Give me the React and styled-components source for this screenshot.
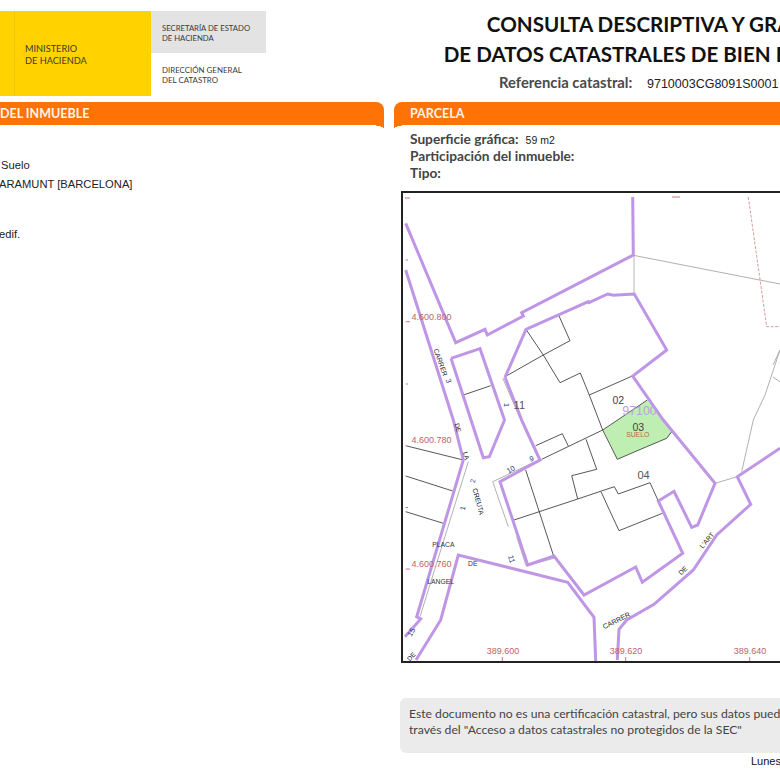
import React from "react";
import styled, { createGlobalStyle } from "styled-components";

const Global = createGlobalStyle`
  html, body { margin: 0; padding: 0; background: #fff; overflow: hidden; }
`;

const Viewport = styled.div`
  width: 780px;
  height: 780px;
  overflow: hidden;
  background: #fff;
`;
const Sheet = styled.div`
  width: 1060px;
  display: flex;
  flex-direction: column;
`;
const Header = styled.header`
  display: flex;
  height: 102px;
  box-sizing: border-box;
  padding-top: 10px;
`;
const Logo = styled.div`
  display: flex;
  flex: 0 0 266px;
  height: 85px;
  margin-top: 1px;
  font-family: Lato, "Liberation Sans", sans-serif;
  color: #3a3a3a;
`;
const Crest = styled.div`
  width: 14px;
  background: #ffd200;
  border-right: 1px solid #f0c800;
`;
const Ministry = styled.div`
  flex: 1;
  background: #ffd200;
  padding: 32px 0 0 10px;
  font-size: 9.2px;
  line-height: 12px;
`;
const Offices = styled.div`
  width: 115px;
  display: flex;
  flex-direction: column;
`;
const Secretary = styled.div`
  height: 42px;
  box-sizing: border-box;
  background: #e3e3e3;
  padding: 13px 0 0 11px;
  font-size: 7.7px;
  line-height: 9.5px;
`;
const Direction = styled.div`
  padding: 13px 0 0 11px;
  font-size: 7.9px;
  line-height: 9.5px;
`;
const TitleBlock = styled.div`
  flex: 0 0 792px;
  font-family: Lato, "Liberation Sans", sans-serif;
  white-space: nowrap;
`;
const Title = styled.h1`
  margin: 0;
  text-align: center;
  font-size: 20.6px;
  line-height: 29.5px;
  font-weight: 700;
  color: #111;
`;
const RefLine = styled.div`
  display: flex;
  align-items: baseline;
  margin: 4px 0 0 233px;
`;
const RefLabel = styled.span`
  font-size: 14.8px;
  font-weight: 700;
  color: #4a4a4a;
  width: 148px;
`;
const RefValue = styled.span`
  font-family: "Liberation Sans", Arial, sans-serif;
  font-size: 12.5px;
  color: #222;
`;
const Columns = styled.main`
  display: flex;
  gap: 10px;
`;
const LeftColumn = styled.section`
  flex: 0 0 384px;
`;
const RightColumn = styled.section`
  flex: 0 0 666px;
`;
const Bar = styled.div`
  position: relative;
  height: 23px;
  line-height: 24px;
  background: #ff7205;
  color: #fff4e8;
  font-family: Lato, "Liberation Sans", sans-serif;
  font-weight: 700;
  font-size: 12.5px;
  white-space: nowrap;
  padding-left: ${(p) => p.$inset}px;
  border-radius: ${(p) => (p.$side === "right" ? "0 8px 0 0" : "8px 0 0 0")};
  &::after {
    content: "";
    position: absolute;
    top: 100%;
    ${(p) => p.$side}: 0;
    width: 14px;
    height: 4px;
    background: radial-gradient(
      ellipse 14px 4px at ${(p) => (p.$side === "right" ? "0 100%" : "100% 100%")},
      transparent 97%,
      #ff7205 100%
    );
  }
`;
const LeftBody = styled.div`
  padding-top: 31px;
  font-family: "Liberation Sans", Arial, sans-serif;
  font-size: 11.2px;
  line-height: 19px;
  color: #222;
  white-space: nowrap;
`;
const LeftRow = styled.div`
  margin-left: ${(p) => p.$indent || 0}px;
  margin-top: ${(p) => p.$gap || 0}px;
`;
const Facts = styled.div`
  padding: 5px 0 0 16px;
  font-family: Lato, "Liberation Sans", sans-serif;
  font-weight: 700;
  font-size: 13.7px;
  color: #444;
`;
const FactRow = styled.div`
  height: 17px;
  line-height: 17px;
  white-space: nowrap;
`;
const FactValue = styled.span`
  font-family: "Liberation Sans", Arial, sans-serif;
  font-weight: 400;
  font-size: 10.5px;
  line-height: 1;
  color: #222;
  margin-left: 7px;
`;
const MapFrame = styled.div`
  box-sizing: border-box;
  width: 600px;
  height: 472px;
  margin: 10px 0 0 7px;
  border: 2px solid #222;
  background: #fff;
  svg { display: block; }
`;
const Notice = styled.div`
  box-sizing: border-box;
  width: 600px;
  height: 55px;
  margin: 35px 0 0 6px;
  padding: 7.5px 9px;
  border-radius: 6px;
  background: #ebebeb;
  font-family: Lato, "Liberation Sans", sans-serif;
  font-size: 12.2px;
  line-height: 16.5px;
  color: #444;
  white-space: nowrap;
`;
const DateLine = styled.div`
  margin: 2px 0 0 357px;
  font-family: "Liberation Sans", Arial, sans-serif;
  font-size: 11px;
  line-height: 13px;
  color: #111;
  white-space: nowrap;
`;

const purple = [
  "632.7,197 633.3,255 521.7,312.7 523.3,316 487.3,335 485,329.3 455.7,342.7 405.7,223.3",
  "405.7,270 453.3,420 463.3,460 416.7,616.7 420.7,619 405,636.7",
  "451,358.3 480,348.7 504.5,420 489.3,456.7 483.3,457.7 471,420 451,358.3",
  "505,377.3 526,329.3 588.3,301.7 589,302.7 607.7,294 613.3,295.3 634.3,294 666.7,350 632.7,376 663.3,420 715,483.3 697.7,525 691.7,527.3 674,491.3 658.3,501 682.7,553.3 642.3,582.3 635.7,567 584,595 554,556 527.7,565 500,481.7 540,460 521.7,420 505,377.3",
  "416,660 440.7,620 458.3,555 567.7,582.3 594,617.3 595.7,661",
  "617.3,660 619,629.3 626.7,620 654,604.3 693.3,570 716.7,535 750.7,504.3 737.3,476.7 780,448.3",
];
const black = [
  "526,329.3 543.3,355 560,382.7 580.3,373 589.3,395 602.7,430 617.3,459.3",
  "558.3,314.3 570,340.7 543.3,355 505,376.7",
  "589.3,395 632.3,376",
  "463.3,395 490.7,385.7",
  "541.7,459.3 602.7,430 647.3,400",
  "535.7,445.7 562.3,433.7 568.3,446",
  "586,439.3 596.7,469.3 571.7,475.7 577.7,499",
  "514,520 577.7,499 614.3,486.7 618.3,494 650,482.7 658.3,501",
  "601,491.7 619,530.7 662.3,513.3",
  "525.7,470 553.3,555",
  "405.7,445.7 463.3,460",
  "405.7,476 452.7,491",
  "405.7,511.7 443.3,523.3",
  "671.7,431.7 666.7,438.3 646.7,446.7 617.3,459.3",
];
const grey = [
  "633.3,255.3 780,284",
  "502.7,378 525,430 538,458",
  "535,461.7 492.7,481.7 508.3,526.7",
  "516.7,536.7 526,565.7 554,558.3",
  "468.3,461.7 420,616.7",
  "715,483.3 737.3,476.7",
  "741.7,471.7 753.3,420 765,395 780,350",
  "773,365 780,350",
  "773,377 780,382",
];
const plain = [
  { x: 618.3, y: 403.5, t: "02", s: 10.5, c: "#444" },
  { x: 638.3, y: 431, t: "03", s: 10.5, c: "#444" },
  { x: 643.5, y: 479, t: "04", s: 11, c: "#555" },
  { x: 519.3, y: 409, t: "11", s: 11, c: "#555" },
  { x: 639.5, y: 414.5, t: "97100", s: 12.4, c: "#b9a0e2" },
  { x: 637.7, y: 436.7, t: "SUELO", s: 6.8, c: "#c0683a" },
  { x: 443.3, y: 546.5, t: "PLACA", s: 6.8, c: "#333" },
  { x: 472.7, y: 566, t: "DE", s: 6.8, c: "#333" },
  { x: 440.7, y: 584.3, t: "LANGEL", s: 6.8, c: "#333" },
  { x: 431.5, y: 319.5, t: "4.600.800", s: 9, c: "#c26268" },
  { x: 431.5, y: 443, t: "4.600.780", s: 9, c: "#c26268" },
  { x: 431.5, y: 567, t: "4.600.760", s: 9, c: "#c26268" },
  { x: 503, y: 654, t: "389.600", s: 9, c: "#c26268" },
  { x: 626, y: 654, t: "389.620", s: 9, c: "#c26268" },
  { x: 750, y: 654, t: "389.640", s: 9, c: "#c26268" },
];
const rotated = [
  { x: 440, y: 362.5, a: 70, t: "CARRER", s: 6.8, c: "#222" },
  { x: 448, y: 381, a: 70, t: "3", s: 7.5, c: "#2a3a8a" },
  { x: 457.3, y: 428, a: 75, t: "DE", s: 6.5, c: "#222" },
  { x: 465.7, y: 456, a: 75, t: "LA", s: 6.5, c: "#222" },
  { x: 473.3, y: 481, a: -80, t: "2", s: 7, c: "#2a3a8a" },
  { x: 463.3, y: 508.3, a: -80, t: "1", s: 7, c: "#2a3a8a" },
  { x: 477.7, y: 501.7, a: 75, t: "CREUTA", s: 6.8, c: "#222" },
  { x: 707.3, y: 540.7, a: -50, t: "L'ART", s: 6.8, c: "#222" },
  { x: 683.3, y: 571, a: -45, t: "DE", s: 6.8, c: "#222" },
  { x: 616.7, y: 621, a: -27, t: "CARRER", s: 7, c: "#222" },
  { x: 511, y: 470, a: -30, t: "10", s: 7.5, c: "#2a3a8a" },
  { x: 531.7, y: 459.3, a: -15, t: "9", s: 7.5, c: "#2a3a8a" },
  { x: 511, y: 559.3, a: 75, t: "11", s: 7.5, c: "#2a3a8a" },
  { x: 411.7, y: 632.3, a: -60, t: "15", s: 7.5, c: "#2a3a8a" },
  { x: 505.7, y: 405, a: 90, t: "1", s: 7, c: "#2a3a8a" },
  { x: 411.7, y: 657, a: -45, t: "DE", s: 6.5, c: "#222" },
];
const ticks = [
  "405,198 410,198", "672,197 680,197", "405.7,260 408,260", "405.7,321.7 410,321.7",
  "405.7,384 408,384", "405.7,507.5 408,507.5", "405.7,569 410,569",
  "502.3,657 502.3,661", "625.7,657 625.7,661", "749.7,657 749.7,661",
];

const CadastralMap = () => (
  <svg width="596" height="468" viewBox="403 193 596 468" fontFamily="'Liberation Sans', Arial, sans-serif" textAnchor="middle">
    <polygon points="603.3,430 647.3,400 671.7,431.7 666.7,438.3 646.7,446.7 617.3,459.3" fill="#bfeeb2" />
    <polyline points="634,255 634,294" fill="none" stroke="#cfcfcf" strokeWidth="1.5" />
    {grey.map((p) => <polyline key={p} points={p} fill="none" stroke="#a8a8a8" strokeWidth="0.9" />)}
    <polyline points="748.3,197 766.7,326.7 780,326.7" fill="none" stroke="#d99a9f" strokeWidth="1" strokeDasharray="3 1.5" />
    {black.map((p) => <polyline key={p} points={p} fill="none" stroke="#444" strokeWidth="0.9" />)}
    {purple.map((p) => <polyline key={p} points={p} fill="none" stroke="#bf96e6" strokeWidth="3" />)}
    {ticks.map((p) => <polyline key={p} points={p} fill="none" stroke="#c97a80" strokeWidth="1" />)}
    {plain.map((l) => <text key={l.t} x={l.x} y={l.y} fontSize={l.s} fill={l.c}>{l.t}</text>)}
    {rotated.map((l) => (
      <text key={l.t + l.x} fontSize={l.s} fill={l.c} dominantBaseline="middle" transform={`translate(${l.x} ${l.y}) rotate(${l.a})`}>{l.t}</text>
    ))}
  </svg>
);

export default function App() {
  return (
    <Viewport>
      <Global />
      <Sheet>
        <Header>
          <Logo>
            <Crest />
            <Ministry>MINISTERIO<br />DE HACIENDA</Ministry>
            <Offices>
              <Secretary>SECRETARÍA DE ESTADO<br />DE HACIENDA</Secretary>
              <Direction>DIRECCIÓN GENERAL<br />DEL CATASTRO</Direction>
            </Offices>
          </Logo>
          <TitleBlock>
            <Title>CONSULTA DESCRIPTIVA Y GRÁFICA<br />DE DATOS CATASTRALES DE BIEN INMUEBLE</Title>
            <RefLine>
              <RefLabel>Referencia catastral:</RefLabel>
              <RefValue>9710003CG8091S0001</RefValue>
            </RefLine>
          </TitleBlock>
        </Header>
        <Columns>
          <LeftColumn>
            <Bar $side="right" $inset={0}>DEL INMUEBLE</Bar>
            <LeftBody>
              <LeftRow $indent={1}>Suelo</LeftRow>
              <LeftRow $indent={-1}>ARAMUNT [BARCELONA]</LeftRow>
              <LeftRow $indent={-1} $gap={31}>edif.</LeftRow>
            </LeftBody>
          </LeftColumn>
          <RightColumn>
            <Bar $side="left" $inset={16}>PARCELA</Bar>
            <Facts>
              <FactRow>Superficie gráfica:<FactValue>59 m2</FactValue></FactRow>
              <FactRow>Participación del inmueble:</FactRow>
              <FactRow>Tipo:</FactRow>
            </Facts>
            <MapFrame><CadastralMap /></MapFrame>
            <Notice>
              Este documento no es una certificación catastral, pero sus datos pueden ser verificados a<br />
              través del "Acceso a datos catastrales no protegidos de la SEC"
            </Notice>
            <DateLine>Lunes</DateLine>
          </RightColumn>
        </Columns>
      </Sheet>
    </Viewport>
  );
}
